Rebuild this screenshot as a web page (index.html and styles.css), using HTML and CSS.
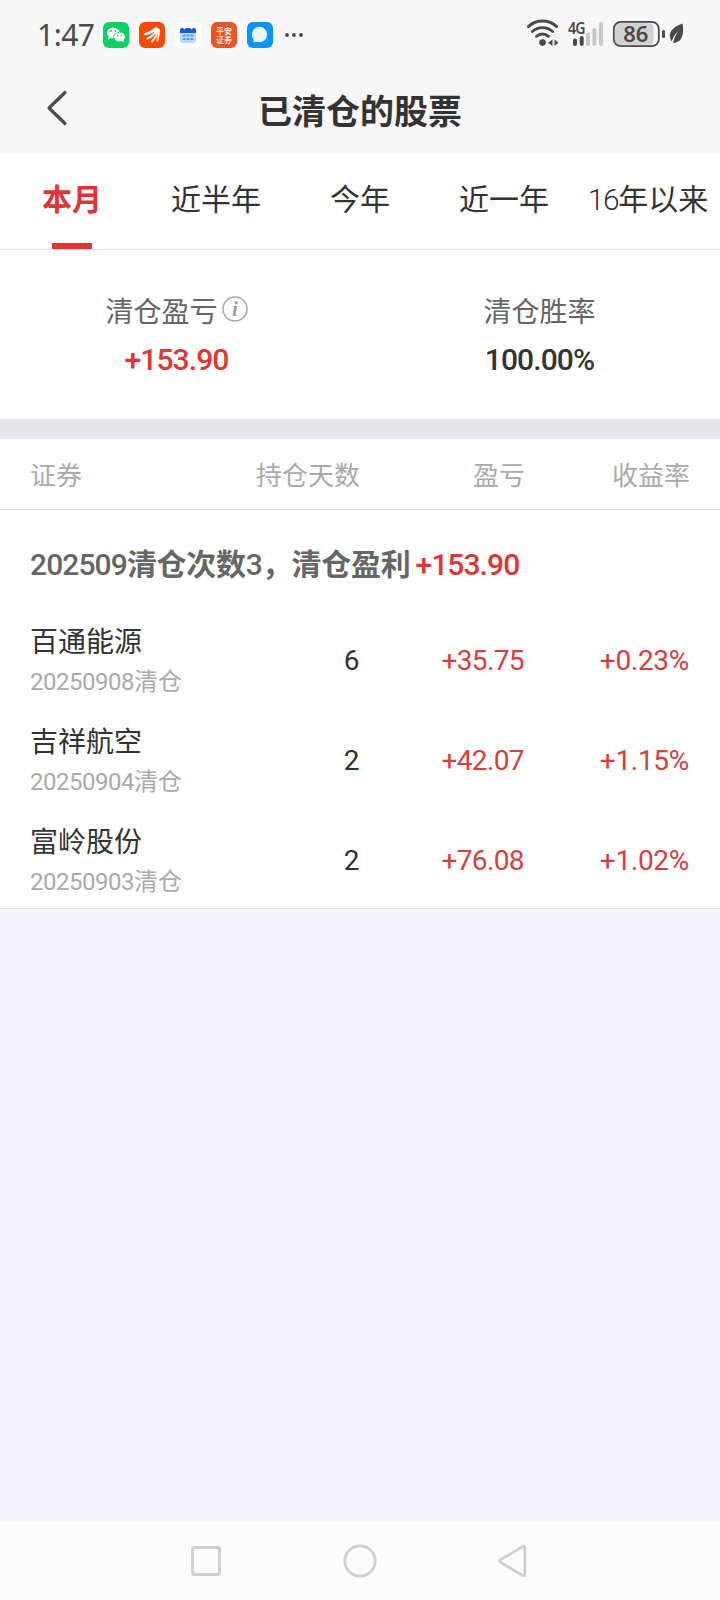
FILE: index.html
```html
<!DOCTYPE html>
<html lang="zh-CN">
<head>
<meta charset="utf-8">
<title>已清仓的股票</title>
<link rel="stylesheet" href="styles.css">
</head>
<body>
<div class="app">
  <header class="top">
    <div class="status">
      <span class="clock">1:47</span>
      <svg class="app-icon" viewBox="0 0 26 26"><rect width="26" height="26" rx="6" fill="#07d268"/><ellipse cx="10.2" cy="10.7" rx="6.3" ry="5.3" fill="#fff"/><path d="M6 14l-1 3.500 3.500-1.600z" fill="#fff"/><ellipse cx="16.500" cy="15" rx="5.800" ry="4.900" fill="#fff" stroke="#07d268" stroke-width=".8"/><path d="M18 18.600l2.700 1.700-.3-3z" fill="#fff"/><g fill="#07c160"><circle cx="8" cy="9" r=".9"/><circle cx="12.400" cy="9" r=".9"/><circle cx="14.600" cy="13.500" r=".8"/><circle cx="18.300" cy="13.500" r=".8"/></g></svg>
      <svg class="app-icon" viewBox="0 0 26 26"><rect width="26" height="26" rx="6" fill="#fa4b05"/><g fill="none" stroke="#fff" stroke-linecap="round"><path d="M6.500 12C11 11.200 14 9.300 17 6.500" stroke-width="2.600"/><path d="M8.500 16.500c4.400-1.800 7.600-5 10-9.500" stroke-width="2.100"/><path d="M13 19.500c3-3 5-7 6-12" stroke-width="1.900"/><path d="M18.300 18.500c1.400-4 1.900-7.500 1.800-11" stroke-width="1.700"/></g></svg>
      <svg class="app-icon" viewBox="0 0 26 26"><rect width="26" height="26" rx="6" fill="#fff"/><rect x="5" y="7" width="16" height="14" rx="2.500" fill="#b5daff"/><path d="M5 11V8q0-2 2-2h12q2 0 2 2v3z" fill="#155ae0"/><g fill="#fff"><circle cx="9.500" cy="6" r="1.200"/><circle cx="16.500" cy="6" r="1.200"/></g><g fill="#4d94ec"><path d="M8 12.500h2.500v2H8zM11.800 12.500h2.500v2h-2.500zM15.600 12.500h2.500v2h-2.500zM8 16h2.500v2H8zM11.800 16h2.500v2h-2.500zM15.600 16h2.500v2h-2.500z"/></g></svg>
      <svg class="app-icon" viewBox="0 0 26 26"><rect width="26" height="26" rx="6" fill="#e95523"/><text class="badge-text" x="13" y="11.900">平安</text><text class="badge-text" x="13" y="20.500">证券</text></svg>
      <svg class="app-icon" viewBox="0 0 26 26"><rect width="26" height="26" rx="6" fill="#0796f8"/><path d="M14 20.500q7 1 7.500-4.500l-1.500 0v4.500z" fill="#12c9fb"/><circle cx="12.500" cy="12.500" r="7.700" fill="#e6f7ff"/><path d="M6.500 16v4.300l5-.8z" fill="#e6f7ff"/></svg>
      <svg class="more" viewBox="0 0 20 6" fill="#4a4a4a"><circle cx="3" cy="3" r="1.900"/><circle cx="10" cy="3" r="1.900"/><circle cx="17" cy="3" r="1.900"/></svg>
      <svg class="system" viewBox="520 10 170 50">
        <g fill="none" stroke="#4a4a4a" stroke-width="2.900" stroke-linecap="round"><path d="M528.300 26.600a21 21 0 0 1 28.400 0M532.400 31.500a15 15 0 0 1 20.200 0M536.500 36.300a9 9 0 0 1 12 0"/></g>
        <circle cx="542.500" cy="42.600" r="3.300" fill="#4a4a4a"/>
        <path d="M552.500 39.500v6.500l-4.500-3.200zM554.500 39.500v6.500l4-3.200z" fill="#4a4a4a"/>
        <text class="net" transform="translate(568 33.500) scale(.86 1)">4G</text>
        <g stroke-width="4" stroke-linecap="round"><path d="M575 40.500v3.500M581.700 38v6" stroke="#4a4a4a"/><path d="M588 34.500v9.500M594.400 30v14M601 24v20" stroke="#c8c8c8"/></g>
        <rect x="615" y="23" width="38.500" height="22.500" rx="5" fill="#d2d2d2"/>
        <rect x="613.800" y="21.800" width="45" height="24.400" rx="7" fill="none" stroke="#4a4a4a" stroke-width="1.800"/>
        <text class="battery" x="635.800" y="42">86</text>
        <rect x="662" y="30" width="3" height="8" rx="1.500" fill="#4a4a4a"/>
        <path d="M682.500 23.500C674 26.500 669 31 670 37c.2 2 1 3.500 1.700 4.500q2-6.500 6.300-10.500q-3.600 5.500-5 12C680 43 685 37 682.500 23.500z" fill="#4a4a4a"/>
      </svg>
    </div>
    <div class="navbar">
      <svg class="back" viewBox="0 0 22 36" fill="none" stroke="#4c4c4c" stroke-width="3.200" stroke-linecap="round" stroke-linejoin="round"><path d="M19 2.500L3 18l16 15.500"/></svg>
      <h1 class="title">已清仓的股票</h1>
    </div>
  </header>
  <nav class="tabs">
    <span class="tab tab-active">本月</span>
    <span class="tab">近半年</span>
    <span class="tab">今年</span>
    <span class="tab">近一年</span>
    <span class="tab"><span class="num">16</span>年以来</span>
  </nav>
  <section class="summary">
    <div class="stat stat-profit">
      <div class="stat-label">清仓盈亏<svg class="info" viewBox="0 0 26 26"><circle cx="13" cy="13" r="12" fill="none" stroke="#a6a6a6" stroke-width="1.500"/><text class="info-text" x="12.800" y="20">i</text></svg></div>
      <div class="stat-value up">+153.90</div>
    </div>
    <div class="stat">
      <div class="stat-label">清仓胜率</div>
      <div class="stat-value">100.00%</div>
    </div>
  </section>
  <section class="list">
    <div class="grid head"><span>证券</span><span>持仓天数</span><span>盈亏</span><span>收益率</span></div>
    <div class="group"><span class="group-num">202509</span>清仓次数<span class="group-num">3</span>，清仓盈利<span class="group-profit up">+153.90</span></div>
    <div class="grid row"><div><div class="name">百通能源</div><div class="date"><span class="num">20250908</span>清仓</div></div><span class="val">6</span><span class="val pos">+35.75</span><span class="val pos">+0.23%</span></div>
    <div class="grid row"><div><div class="name">吉祥航空</div><div class="date"><span class="num">20250904</span>清仓</div></div><span class="val">2</span><span class="val pos">+42.07</span><span class="val pos">+1.15%</span></div>
    <div class="grid row"><div><div class="name">富岭股份</div><div class="date"><span class="num">20250903</span>清仓</div></div><span class="val">2</span><span class="val pos">+76.08</span><span class="val pos">+1.02%</span></div>
  </section>
  <footer class="sysnav">
    <svg viewBox="0 0 36 36"><rect x="4.500" y="4.500" width="27" height="27" rx="1.500"/></svg>
    <svg viewBox="0 0 36 36"><circle cx="18" cy="18" r="15.200"/></svg>
    <svg viewBox="0 0 36 36"><path d="M4.500 16.800L26.800 3.500q2-1 2 1V31.500q0 2-2 1L4.500 19.200q-2-1.200 0-2.400z"/></svg>
  </footer>
</div>
</body>
</html>
```

FILE: styles.css
```css
* { box-sizing: border-box; }
body { margin: 0; font-family: "Noto Sans CJK SC", sans-serif; color: #333; }
.app { width: 720px; height: 1600px; display: flex; flex-direction: column; background: #f3f4f9; }
.top { height: 153px; background: #f7f7f7; }
.status { height: 70px; display: flex; align-items: center; padding-left: 37px; }
.clock { width: 66px; font: 400 30px/40px "Noto Sans", sans-serif; letter-spacing: -0.5px; color: #4a4a4a; }
.app-icon { width: 26px; height: 26px; margin-right: 10px; }
.badge-text { font: 500 8px "Noto Sans CJK SC", sans-serif; fill: #fff; text-anchor: middle; }
.more { width: 20px; height: 6px; margin-left: 1px; }
.system { width: 170px; height: 50px; margin-left: auto; margin-right: 30px; }
.net { font: 600 16.500px "Noto Sans", sans-serif; letter-spacing: -1px; fill: #4a4a4a; }
.battery { font: 600 22px "Noto Sans", sans-serif; fill: #4a4a4a; text-anchor: middle; }
.navbar { height: 83px; display: grid; grid-template-columns: 66px 1fr 66px; align-items: center; }
.back { width: 22px; height: 36px; margin-left: 46px; margin-top: -7px; }
.title { margin: 0; font-size: 34px; font-weight: 700; line-height: 50px; text-align: center; margin-top: -3px; }
.tabs { height: 97px; display: grid; grid-template-columns: repeat(5, 144px); background: #fff; border-bottom: 1px solid #e5e5e5; }
.tab { display: flex; flex-direction: row; justify-content: center; align-items: baseline; font-size: 30px; line-height: 88px; white-space: nowrap; }
.tab-active { flex-direction: column; justify-content: space-between; align-items: center; color: #e13434; font-weight: 700; }
.tab-active::after { content: ""; width: 40px; height: 6px; background: #e93030; }
.num { font-family: Roboto, sans-serif; line-height: 1; letter-spacing: -0.5px; }
.tab .num { font-weight: 300; letter-spacing: -1.500px; }
.summary { height: 169px; padding-top: 37px; display: grid; grid-template-columns: 353px 1fr; background: #fff; }
.stat { display: flex; flex-direction: column; align-items: center; }
.stat:last-child { padding-left: 6px; }
.stat-label { display: flex; font-size: 28px; line-height: 47px; height: 46px; color: #666; }
.info { width: 26px; height: 26px; margin: 9px 0 0 4px; }
.info-text { font: italic 700 21px "Liberation Serif", serif; fill: #a0a0a0; text-anchor: middle; }
.stat-value { font: 500 30px/54px Roboto, sans-serif; letter-spacing: -0.9px; }
.up { color: #e13434; }
.list { height: 490px; background: #fff; border-top: 20px solid #e5e5ee; border-bottom: 1px solid #e1e2e6; }
.grid { display: grid; grid-template-columns: 160px 169px 165px 165px; padding: 0 30px; }
.grid > :not(:first-child) { text-align: right; }
.head { grid-template-columns: 160px 170px 165px 165px; height: 71px; line-height: 70px; font-size: 26px; color: #aaa; border-bottom: 1px solid #e5e5e5; }
.group { height: 99px; padding-left: 30px; line-height: 105px; font-size: 30px; font-weight: 700; letter-spacing: -0.300px; color: #666; white-space: nowrap; }
.group-num, .group-profit { font: 500 30px/1 Roboto, sans-serif; letter-spacing: -0.900px; }
.group-profit { margin-left: 5px; }
.row { height: 100px; }
.name { font-size: 28px; line-height: 40px; padding-top: 11px; }
.date { font-size: 24px; line-height: 40px; color: #aaa; }
.val { font: 400 28px/104px Roboto, sans-serif; letter-spacing: -0.600px; }
.val:last-child { letter-spacing: -0.300px; }
.pos { color: #d63f3f; }
.sysnav { height: 78px; margin-top: auto; background: #fcfcfc; display: flex; justify-content: center; gap: 118px; align-items: center; }
.sysnav svg { width: 36px; height: 36px; fill: none; stroke: #d0d0d0; stroke-width: 2.800; }
```
